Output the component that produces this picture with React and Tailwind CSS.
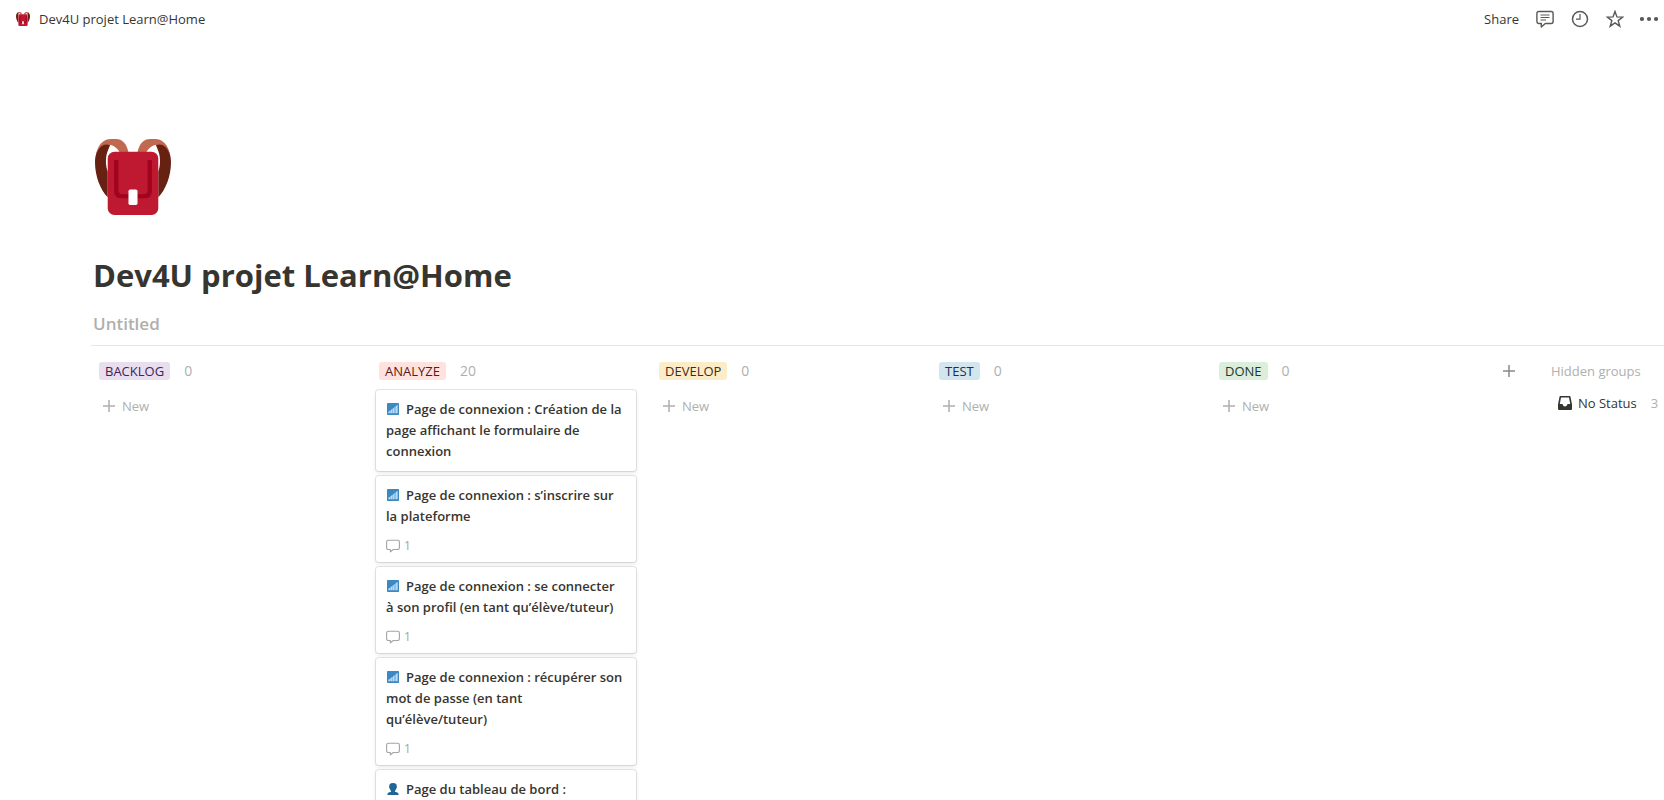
import React from "react";

const columns = [
  { name: "BACKLOG", count: 0, tag: "bg-[#e8deee] text-[#412454]" },
  { name: "ANALYZE", count: 20, tag: "bg-[#ffe2dd] text-[#5d1715]" },
  { name: "DEVELOP", count: 0, tag: "bg-[#fdecc8] text-[#402c1b]" },
  { name: "TEST", count: 0, tag: "bg-[#d3e5ef] text-[#183347]" },
  { name: "DONE", count: 0, tag: "bg-[#dbeddb] text-[#1c3829]" },
];

const cards = [
  { icon: "signal", title: "Page de connexion : Création de la page affichant le formulaire de connexion", comments: 0 },
  { icon: "signal", title: "Page de connexion : s’inscrire sur la plateforme", comments: 1 },
  { icon: "signal", title: "Page de connexion : se connecter à\u00a0son profil (en tant qu’élève/tuteur)", comments: 1 },
  { icon: "signal", title: "Page de connexion : récupérer son mot de passe (en tant qu’élève/tuteur)", comments: 1 },
  { icon: "person", title: "Page du tableau de bord :", comments: 0 },
];

function Backpack({ className }) {
  return (
    <svg viewBox="0 0 227 227" className={className} aria-hidden="true">
      <path fill="#662113" d="M26 12C8 24 0 45 0 70c0 40 16 82 38 104V98c-6-16-8-42 0-62l8-20z" />
      <path fill="#662113" d="M201 12c18 12 26 33 26 58 0 40-16 82-38 104V98c6-16 8-42 0-62l-8-20z" />
      <path fill="#c1694f" d="M3 48C8 18 24 0 48 0h14c20 0 33 14 38 40H74C66 26 54 18 44 18 28 12 12 20 3 48z" />
      <path fill="#c1694f" d="M224 48C219 18 203 0 179 0h-14c-20 0-33 14-38 40h26c8-14 20-22 30-22 16-6 32 2 41 30z" />
      <rect x="38" y="38" width="151" height="189" rx="20" fill="#be1931" />
      <path fill="#a0041e" d="M57 63h13v89q0 13 12 13h63q12 0 12-13V63h13v92q0 22-22 22H79q-22 0-22-22z" />
      <rect x="100" y="151" width="27" height="46" rx="5" fill="#fff" />
    </svg>
  );
}

function SignalIcon() {
  return (
    <svg viewBox="0 0 36 36" className="mr-[7px] ml-px inline-block size-3 align-[-1px]" aria-hidden="true">
      <rect width="36" height="36" rx="2" fill="#3b88c3" />
      <path fill="#bbdaf3" d="M4 31v-5l5-3v8zM10 31v-9l5-3v12zM16 31V18l5-4v17zM22 31V13l4-3v21zM27 31V9l5-4v26z" />
    </svg>
  );
}

function PersonIcon() {
  return (
    <svg viewBox="0 0 36 36" className="mr-[7px] ml-px inline-block size-3 align-[-1px]" aria-hidden="true">
      <path fill="#269" d="M24 26v-3c3-2 4-5 4-8 2 0 3-4 1-5 1-6-2-10-11-10S6 4 7 10c-2 1-1 5 1 5 0 3 1 6 4 8v3C4 27 1 30 1 36h34c0-6-3-9-11-10z" />
    </svg>
  );
}

function CommentIcon() {
  return (
    <svg viewBox="0 0 14 14" className="size-3.5" fill="none" stroke="currentColor" strokeWidth="1.1" strokeLinejoin="round" aria-hidden="true">
      <path d="M2.3 1.3h9.4a1.7 1.7 0 0 1 1.7 1.7v5.8a1.7 1.7 0 0 1-1.7 1.7H7.2L4.4 12.9v-2.4H2.3A1.7 1.7 0 0 1 .6 8.800V3a1.7 1.7 0 0 1 1.7-1.7z" />
    </svg>
  );
}

function PlusIcon() {
  return (
    <svg viewBox="0 0 12 12" className="size-3" stroke="currentColor" strokeWidth="1.5" aria-hidden="true">
      <path d="M6 0v12M0 6h12" />
    </svg>
  );
}

function TopBar() {
  return (
    <header className="flex h-[38px] shrink-0 items-center justify-between pr-1.5 pl-[15px]">
      <a href="#page" className="flex items-center gap-2">
        <Backpack className="size-4 p-px" />
        Dev4U projet Learn@Home
      </a>
      <div className="flex items-center text-[#5a5955]">
        <button type="button" className="mr-[17px] text-[#37352f]">Share</button>
        <button type="button" aria-label="Comments" className="mr-[17px]">
          <svg viewBox="0 0 18 18" className="size-[18px]" fill="none" stroke="currentColor" strokeWidth="1.4" strokeLinejoin="round">
            <path d="M2.800 1.500h12.400a1.900 1.900 0 0 1 1.900 1.900v8.200a1.900 1.900 0 0 1-1.900 1.900H9.300L5.300 17v-3.500H2.800A1.900 1.900 0 0 1 .9 11.600V3.400a1.900 1.900 0 0 1 1.900-1.900z" />
            <path strokeWidth="1" d="M4.500 5h9M4.500 7.500h9M4.500 10h5.500" />
          </svg>
        </button>
        <button type="button" aria-label="Updates" className="mr-[17px]">
          <svg viewBox="0 0 18 18" className="size-[18px]" fill="none" stroke="currentColor" strokeWidth="1.500">
            <circle cx="9" cy="9" r="7.500" />
            <path d="M9 4v5.200H5" strokeWidth="1.200" />
          </svg>
        </button>
        <button type="button" aria-label="Favorite" className="mr-4">
          <svg viewBox="0 0 18 18" className="size-[18px]" fill="none" stroke="currentColor" strokeWidth="1.400">
            <path d="M9 1.400l1.950 5.500 5.800.15-4.600 3.550 1.650 5.600L9 12.900l-4.800 3.300 1.650-5.600-4.600-3.550 5.800-.15z" />
          </svg>
        </button>
        <button type="button" aria-label="More">
          <svg viewBox="0 0 18 18" className="size-[18px]" fill="currentColor">
            <circle cx="2" cy="9" r="2.100" />
            <circle cx="9" cy="9" r="2.100" />
            <circle cx="16" cy="9" r="2.100" />
          </svg>
        </button>
      </div>
    </header>
  );
}

function Card({ card }) {
  return (
    <article className="rounded-[3px] bg-white px-2.5 py-[9px] shadow-[0_0_0_1px_rgba(15,15,15,0.1),0_2px_4px_rgba(15,15,15,0.1)]">
      <h3 className="leading-[21px] font-semibold">
        {card.icon === "signal" ? <SignalIcon /> : <PersonIcon />}
        {card.title}
      </h3>
      {card.comments > 0 && (
        <div className="mt-3 flex h-3.5 items-center gap-1 text-xs text-[#a5a4a1]">
          <CommentIcon />
          {card.comments}
        </div>
      )}
    </article>
  );
}

function Column({ column, items }) {
  return (
    <section className="w-[260px] shrink-0">
      <div className="flex h-11 items-center pt-1.5 pl-[3px]">
        <h2 className={"h-[18px] rounded-[3px] px-1.5 leading-[18px] " + column.tag}>{column.name}</h2>
        <span className="ml-3.5 text-sm text-[#b0afac]">{column.count}</span>
      </div>
      {items.length > 0 ? (
        <div className="flex flex-col gap-[5px]">
          {items.map((card) => <Card key={card.title} card={card} />)}
        </div>
      ) : (
        <button type="button" className="flex h-8 items-center gap-[7px] pl-[7px] text-[#b0afac]">
          <PlusIcon />
          New
        </button>
      )}
    </section>
  );
}

export default function App() {
  return (
    <div className="flex h-screen flex-col overflow-hidden bg-white font-['Open_Sans','Segoe_UI',sans-serif] text-[13px] leading-5 text-[#37352f]">
      <TopBar />
      <main className="min-h-0 flex-1 overflow-hidden pt-[101px]">
        <div className="pl-[95px]">
          <Backpack className="size-[76px]" />
        </div>
        <h1 className="mt-9 pl-[93px] text-[31px] leading-12 font-bold">Dev4U projet Learn@Home</h1>
        <h2 className="mt-2.5 pl-[93px] text-[17px] leading-[30px] font-semibold text-[#b0afac]">Untitled</h2>
        <div className="mt-1.5 ml-[91px] flex gap-5 border-t border-[#e6e6e5] pl-[5px]">
          {columns.map((column) => (
            <Column key={column.name} column={column} items={column.name === "ANALYZE" ? cards : []} />
          ))}
          <div className="flex h-[50px] w-[26px] shrink-0 items-center justify-center text-[#8a8986]">
            <button type="button" aria-label="Add a group"><PlusIcon /></button>
          </div>
          <section className="ml-[9px] flex-1 whitespace-nowrap">
            <h2 className="flex h-11 items-center pt-1.5 text-[#b0afac]">Hidden groups</h2>
            <a href="#no-status" className="flex h-[26px] items-center pl-[7px]">
              <svg viewBox="0 0 14 14" className="mr-1.5 size-3.5" aria-hidden="true">
                <path fill="#37352f" fillRule="evenodd" d="M2.500 0h9a1 1 0 0 1 1 .8L14 8.500V13a1 1 0 0 1-1 1H1a1 1 0 0 1-1-1V8.500L1.500.8a1 1 0 0 1 1-.8zM3 1.500L1.800 8H4.500c.3 1.500 1.200 2.400 2.500 2.400S9.200 9.500 9.500 8h2.700L11 1.500z" />
              </svg>
              No Status
              <span className="ml-3.5 text-[#b0afac]">3</span>
            </a>
          </section>
        </div>
      </main>
    </div>
  );
}
